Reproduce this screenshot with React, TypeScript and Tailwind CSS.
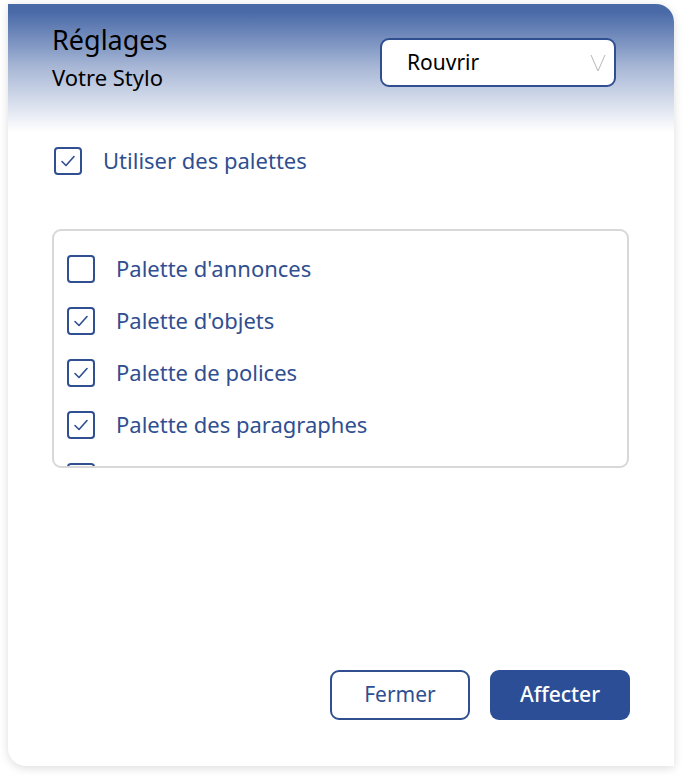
import { useState } from "react";

const Check = ({ checked }: { checked: boolean }) => (
  <span className="w-[28px] h-[28px] shrink-0 rounded-[4px] border-2 border-[#2f4f90] flex items-center justify-center bg-white">
    {checked && (
      <svg width="18" height="18" viewBox="0 0 18 18" fill="none">
        <path d="M3 9.5 L7 13.5 L15 4.5" stroke="#2f4f90" strokeWidth="1.6" strokeLinecap="round" strokeLinejoin="round" />
      </svg>
    )}
  </span>
);

const palettes = [
  { label: "Palette d'annonces", on: false },
  { label: "Palette d'objets", on: true },
  { label: "Palette de polices", on: true },
  { label: "Palette des paragraphes", on: true },
];

const App = () => {
  const [items] = useState(palettes);
  return (
    <div className="w-[684px] h-[776px] bg-white pt-[4px] pl-[8px]" style={{ fontFamily: "'Noto Sans', sans-serif" }}>
      <div className="w-[666px] h-[762px] bg-white rounded-tr-[18px] rounded-bl-[18px] shadow-[0_2px_10px_rgba(0,0,0,0.14)] overflow-hidden flex flex-col">
        <div className="h-[128px] bg-gradient-to-b from-[#4969a7] from-[6%] via-[#a9b8d6] via-[50%] to-white to-100% flex justify-between pl-[44px] pr-[58px] pt-[19px]">
          <div>
            <div className="text-[27px] leading-[34px] text-black">Réglages</div>
            <div className="text-[22px] leading-[28px] mt-[6px] text-black">Votre Stylo</div>
          </div>
          <div className="mt-[15px] w-[236px] h-[49px] rounded-[9px] border-2 border-[#2f4f90] bg-white flex items-center justify-between pl-[25px] pr-[8px]">
            <span className="text-[21px] text-black">Rouvrir</span>
            <svg width="16" height="20" viewBox="0 0 16 20" fill="none">
              <path d="M1 2 L8 18 L15 2" stroke="#b8b8b8" strokeWidth="1" />
            </svg>
          </div>
        </div>

        <div className="pl-[44px] pr-[45px]">
          <label className="flex items-center gap-[21px] mt-[15px] ml-[2px] h-[28px]">
            <Check checked />
            <span className="text-[22px] leading-[28px] -mt-[3px] text-[#2f4f90]">Utiliser des palettes</span>
          </label>

          <div className="mt-[54px] w-[577px] h-[239px] border-2 border-[#d8d8d8] rounded-[9px] overflow-hidden pl-[13px] pt-[12px]">
            {items.map((p) => (
              <label key={p.label} className="flex items-center gap-[21px] h-[52px]">
                <Check checked={p.on} />
                <span className="text-[22px] leading-[28px] -mt-[2px] text-[#2f4f90]">{p.label}</span>
              </label>
            ))}
            {/* next row, only its checkbox top peeks out of the scroll box */}
            <div className="flex items-center h-[52px]">
              <Check checked />
            </div>
          </div>
        </div>

        <div className="mt-auto mb-[46px] flex justify-end gap-[20px] pr-[44px]">
          <button className="w-[140px] h-[50px] rounded-[9px] border-2 border-[#2f4f90] bg-white text-[21px] text-[#2f4f90]">
            Fermer
          </button>
          <button className="w-[140px] h-[50px] rounded-[9px] bg-[#2b4e96] text-[21px] font-medium text-white">
            Affecter
          </button>
        </div>
      </div>
    </div>
  );
};

export default App;
